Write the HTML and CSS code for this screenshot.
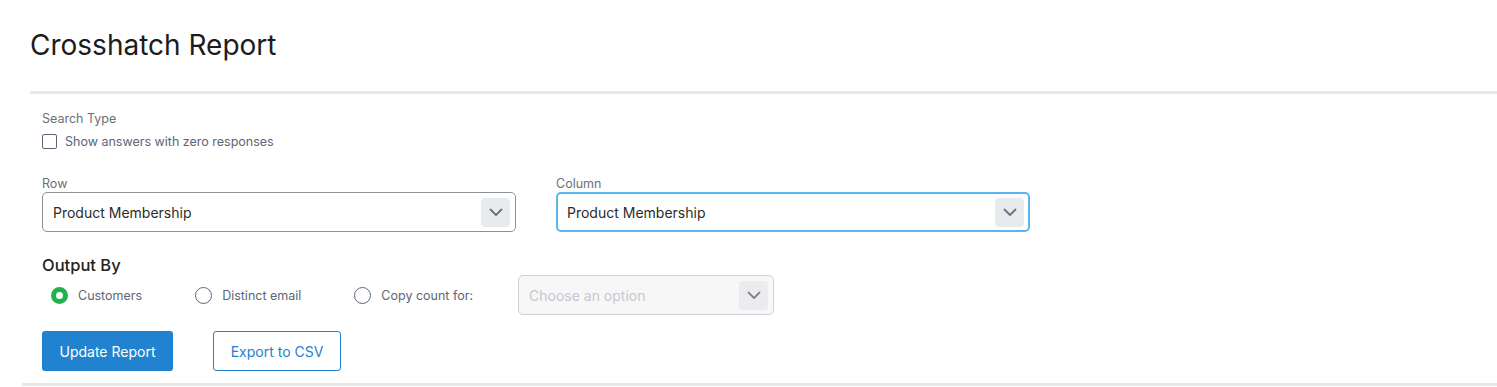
FILE: index.html
```html
<!DOCTYPE html>
<html lang="en">
<head>
    <meta charset="UTF-8">
    <meta name="viewport" content="width=device-width, initial-scale=1.0">
    <title>Crosshatch Report</title>
    <link rel="stylesheet" href="styles.css">
</head>
<body>
    <div class="page-head">
        <h1>Crosshatch Report</h1>
    </div>

    <div class="panel">
        <div class="search-type">
            <div class="small-label">Search Type</div>
            <label class="check"><input type="checkbox" id="zeroCheckbox"> Show answers with zero responses</label>
        </div>

        <div class="selects">
            <div class="field">
                <div class="small-label">Row</div>
                <div class="select">
                    <span>Product Membership</span>
                    <span class="arrow"><svg width="14" height="9" viewBox="0 0 14 9"><path d="M1.5 1.5 L7 7 L12.5 1.5" fill="none" stroke="#6b7280" stroke-width="1.8" stroke-linecap="round" stroke-linejoin="round"/></svg></span>
                </div>
            </div>
            <div class="field">
                <div class="small-label">Column</div>
                <div class="select focused">
                    <span>Product Membership</span>
                    <span class="arrow"><svg width="14" height="9" viewBox="0 0 14 9"><path d="M1.5 1.5 L7 7 L12.5 1.5" fill="none" stroke="#6b7280" stroke-width="1.8" stroke-linecap="round" stroke-linejoin="round"/></svg></span>
                </div>
            </div>
        </div>

        <h2>Output By</h2>
        <div class="output-row">
            <label class="radio"><span class="dot checked"></span>Customers</label>
            <label class="radio"><span class="dot"></span>Distinct email</label>
            <label class="radio"><span class="dot"></span>Copy count for:</label>
            <div class="select disabled">
                <span>Choose an option</span>
                <span class="arrow"><svg width="14" height="9" viewBox="0 0 14 9"><path d="M1.5 1.5 L7 7 L12.5 1.5" fill="none" stroke="#7b8494" stroke-width="1.8" stroke-linecap="round" stroke-linejoin="round"/></svg></span>
            </div>
        </div>

        <div class="buttons">
            <button class="primary">Update Report</button>
            <button class="outline">Export to CSV</button>
        </div>
    </div>
</body>
</html>
```

FILE: styles.css
```css
body {
    margin: 0;
    font-family: 'Inter', 'Roboto', sans-serif;
    background-color: #fff;
    color: #333;
}

.page-head {
    margin-left: 30px;
    padding-top: 28px;
    padding-bottom: 29px;
    border-bottom: 3px solid #e8e8e8;
}

h1 {
    margin: 0;
    font-size: 28px;
    font-weight: 400;
    line-height: 34px;
    color: #1c1c1c;
}

.panel {
    margin-left: 22px;
    padding: 17px 0 12px 20px;
    border-bottom: 3px solid #e8e8e8;
}

.small-label {
    font-size: 12.5px;
    line-height: 16px;
    color: #6b6f78;
}

.check {
    display: flex;
    align-items: center;
    margin-top: 7px;
    font-size: 12.5px;
    color: #5d6577;
}

.check input[type="checkbox"] {
    appearance: none;
    -webkit-appearance: none;
    width: 15px;
    height: 15px;
    margin: 0 8px 0 0;
    border: 1.5px solid #5d6577;
    border-radius: 2px;
    background-color: #fff;
}

.selects {
    display: flex;
    gap: 40px;
    margin-top: 27px;
}

.select {
    display: flex;
    align-items: center;
    justify-content: space-between;
    box-sizing: border-box;
    width: 474px;
    height: 40px;
    padding: 0 5px 0 10px;
    border: 1px solid #8c9099;
    border-radius: 5px;
    font-size: 14px;
    color: #2b2b2b;
}

.select.focused {
    border: 2px solid #5bb6ef;
    padding-left: 9px;
    padding-right: 4px;
}

.arrow {
    display: flex;
    align-items: center;
    justify-content: center;
    width: 29px;
    height: 29px;
    border-radius: 4px;
    background-color: #e9eaee;
}

h2 {
    margin: 24px 0 0;
    font-size: 16.5px;
    font-weight: 500;
    line-height: 18px;
    color: #222;
}

.output-row {
    display: flex;
    align-items: center;
    margin-top: 1px;
}

.radio {
    display: flex;
    align-items: center;
    font-size: 12.5px;
    color: #5d6577;
    margin-right: 53px;
}

.radio:first-child {
    margin-left: 9px;
}

.radio:nth-child(3) {
    margin-right: 45px;
}

.dot {
    box-sizing: border-box;
    width: 17px;
    height: 17px;
    margin-right: 10px;
    border: 1.5px solid #5d6577;
    border-radius: 50%;
    background-color: #fff;
}

.dot.checked {
    border: 5px solid #1fb24a;
}

.select.disabled {
    width: 256px;
    background-color: #f7f7f8;
    border-color: #d0d0da;
    color: #c6c7d0;
}

.select.disabled .arrow {
    background-color: #ececef;
}

.buttons {
    display: flex;
    gap: 40px;
    margin-top: 16px;
}

button {
    height: 40px;
    padding: 0 16px;
    font-family: 'Inter', 'Roboto', sans-serif;
    font-size: 14px;
    border-radius: 3px;
    cursor: pointer;
}

button.primary {
    width: 131px;
    border: none;
    background-color: #2183d0;
    color: #fff;
}

button.outline {
    width: 128px;
    border: 1px solid #2183d0;
    background-color: #fff;
    color: #2183d0;
}
```
